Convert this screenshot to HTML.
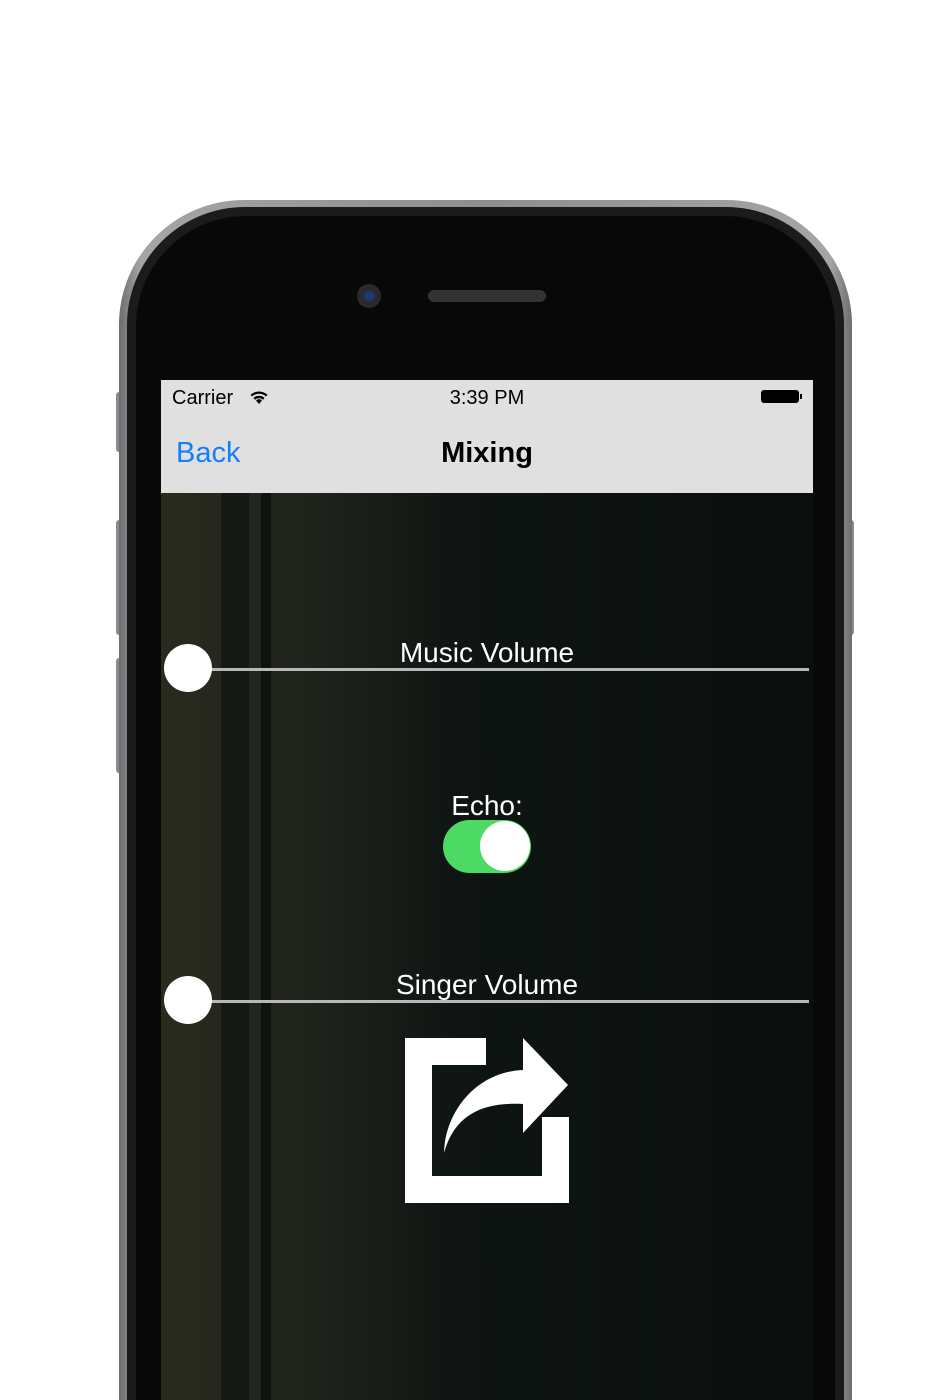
<!DOCTYPE html>
<html><head><style>
html,body{margin:0;padding:0;width:945px;height:1400px;background:#fff;overflow:hidden;font-family:"Liberation Sans",sans-serif}
.abs{position:absolute}
</style></head><body>
<div class="abs" style="left:116px;top:520px;width:6px;height:115px;background:#8a8a8e;border-radius:3px"></div>
<div class="abs" style="left:116px;top:658px;width:6px;height:115px;background:#8a8a8e;border-radius:3px"></div>
<div class="abs" style="left:116px;top:392px;width:6px;height:60px;background:#8a8a8e;border-radius:3px"></div>
<div class="abs" style="left:848px;top:520px;width:6px;height:115px;background:#8a8a8e;border-radius:3px"></div>
<div class="abs" style="left:119px;top:200px;width:733px;height:1200px;border-radius:125px 125px 0 0;background:linear-gradient(90deg,#6d6d70,#a5a5a8 3%,#8e8e92 50%,#a5a5a8 97%,#6d6d70)"></div>
<div class="abs" style="left:127px;top:207px;width:717px;height:1193px;border-radius:118px 118px 0 0;background:#1b1b1c"></div>
<div class="abs" style="left:136px;top:216px;width:699px;height:1184px;border-radius:110px 110px 0 0;background:#080808"></div>
<div class="abs" style="left:357px;top:284px;width:24px;height:24px;border-radius:50%;background:#2a2a2c"></div>
<div class="abs" style="left:364px;top:291px;width:10px;height:10px;border-radius:50%;background:#1c3a78"></div>
<div class="abs" style="left:428px;top:290px;width:118px;height:12px;border-radius:6px;background:#333335"></div>
<div class="abs" style="left:161px;top:380px;width:652px;height:1020px;overflow:hidden;background:linear-gradient(90deg,#2a2b1f 0%,#1d221b 25%,#0f1512 45%,#0a0f0d 100%)">
  <div class="abs" style="left:0;top:0;width:652px;height:113px;background:#e0e0e0"></div>
  <div class="abs" style="left:11px;top:7px;font-size:20px;color:#000">Carrier</div>
  <svg class="abs" style="left:88px;top:9px" width="20" height="16" viewBox="0 0 20 16"><path d="M10 15l-3-3.5a4 4 0 016 0zM4.5 9a8 8 0 0111 0l-1.5 1.7a6 6 0 00-8 0zM1.5 5.8a12.5 12.5 0 0117 0l-1.5 1.7a10.3 10.3 0 00-14 0z" fill="#000"/></svg>
  <div class="abs" style="left:0;width:652px;top:7px;font-size:20px;text-align:center;color:#000">3:39 PM</div>
  <div class="abs" style="left:600px;top:10px;width:38px;height:13px;border:1.5px solid #000;border-radius:3px;background:#000;box-sizing:border-box"></div>
  <div class="abs" style="left:639px;top:14px;width:2px;height:5px;background:#000"></div>
  <div class="abs" style="left:15px;top:57px;font-size:29px;color:#157efb">Back</div>
  <div class="abs" style="left:0;width:652px;top:57px;font-size:29px;font-weight:bold;text-align:center;color:#000">Mixing</div>
  <div class="abs" style="left:60px;top:113px;width:28px;height:907px;background:#0e1410;opacity:.7"></div>
  <div class="abs" style="left:100px;top:113px;width:10px;height:907px;background:#0a0f0c;opacity:.8"></div>
  <div class="abs" style="left:0;width:652px;top:257px;font-size:28px;color:#fff;text-align:center">Music Volume</div>
  <div class="abs" style="left:27px;top:288px;width:621px;height:3px;background:#b8b8b8"></div>
  <div class="abs" style="left:3px;top:264px;width:48px;height:48px;border-radius:50%;background:#fff"></div>
  <div class="abs" style="left:0;width:652px;top:410px;font-size:28px;color:#fff;text-align:center">Echo:</div>
  <div class="abs" style="left:282px;top:440px;width:88px;height:53px;border-radius:27px;background:#4cd964"></div>
  <div class="abs" style="left:319px;top:441px;width:50px;height:50px;border-radius:50%;background:#fff"></div>
  <div class="abs" style="left:0;width:652px;top:589px;font-size:28px;color:#fff;text-align:center">Singer Volume</div>
  <div class="abs" style="left:27px;top:620px;width:621px;height:3px;background:#b8b8b8"></div>
  <div class="abs" style="left:3px;top:596px;width:48px;height:48px;border-radius:50%;background:#fff"></div>
  <svg class="abs" style="left:244px;top:658px" width="165" height="166" viewBox="0 0 165 166">
    <path d="M0 0H81V27H27V138H137V79H164V165H0Z" fill="#fff"/>
    <path d="M118 0L163 47L118 95V66C80 64 50 75 39 115C40 75 70 34 118 32Z" fill="#fff"/>
  </svg>
</div>
</body></html>
